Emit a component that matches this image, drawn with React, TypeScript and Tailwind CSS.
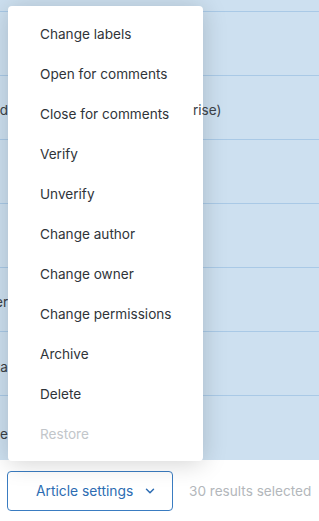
import { ChevronDown } from 'lucide-react';

const items = [
  'Change labels',
  'Open for comments',
  'Close for comments',
  'Verify',
  'Unverify',
  'Change author',
  'Change owner',
  'Change permissions',
  'Archive',
  'Delete',
];

const rows: { left?: string; right?: string; pad: string }[] = [
  { pad: 'pt-[6px]' },
  { left: 'Published', right: 'rise)', pad: 'pt-[6px]' },
  { pad: 'pt-[6px]' },
  { pad: 'pt-[6px]' },
  { left: 'Customer', pad: 'pt-[6px]' },
  { left: 'Data', pad: 'pt-[8px]' },
  { left: 'Article', pad: 'pt-[12px]' },
];

export default function App() {
  return (
    <div
      className="relative h-[521px] w-[319px] overflow-hidden bg-white text-[13.6px] text-[#2f3439]"
      style={{ fontFamily: 'Inter, "Noto Sans", sans-serif' }}
    >
      {/* table behind the menu */}
      <div className="flex h-[460px] flex-col overflow-hidden bg-[#cde0f0]">
        <div className="h-[12px] shrink-0 border-b border-[#a9c9e6]" />
        {rows.map((row, i) => (
          <div
            key={i}
            className={`relative flex h-16 shrink-0 items-center border-b border-[#a9c9e6] last:border-b-0 ${row.pad}`}
          >
            <div className="flex w-[8px] shrink-0 justify-end overflow-hidden whitespace-nowrap text-[#3a4046]">
              {row.left}
            </div>
            {row.right && (
              <span className="relative z-20 ml-[185px] whitespace-nowrap text-[#3a4046]">
                {row.right}
              </span>
            )}
          </div>
        ))}
      </div>

      {/* dropdown menu */}
      <ul className="absolute left-[8px] top-[6px] z-10 w-[195px] rounded bg-white pb-[7px] pt-[8px] shadow-[0_2px_24px_rgba(0,0,0,0.18)]">
        {items.map((label) => (
          <li key={label} className="flex h-10 items-center pl-8">
            {label}
          </li>
        ))}
        <li className="flex h-10 items-center pl-8 text-[#c2c6ca]">Restore</li>
      </ul>

      {/* footer */}
      <div className="flex items-center gap-4 pl-[7px] pt-[11px]">
        <button
          type="button"
          className="flex h-10 w-[166px] items-center gap-2.5 rounded border border-[#3a7cc1] pl-[28px] text-[13.8px] text-[#2c6cb2]"
        >
          Article settings
          <ChevronDown className="h-3.5 w-3.5" strokeWidth={2.5} />
        </button>
        <span className="text-[#b3b7bb]">30 results selected</span>
      </div>
    </div>
  );
}
